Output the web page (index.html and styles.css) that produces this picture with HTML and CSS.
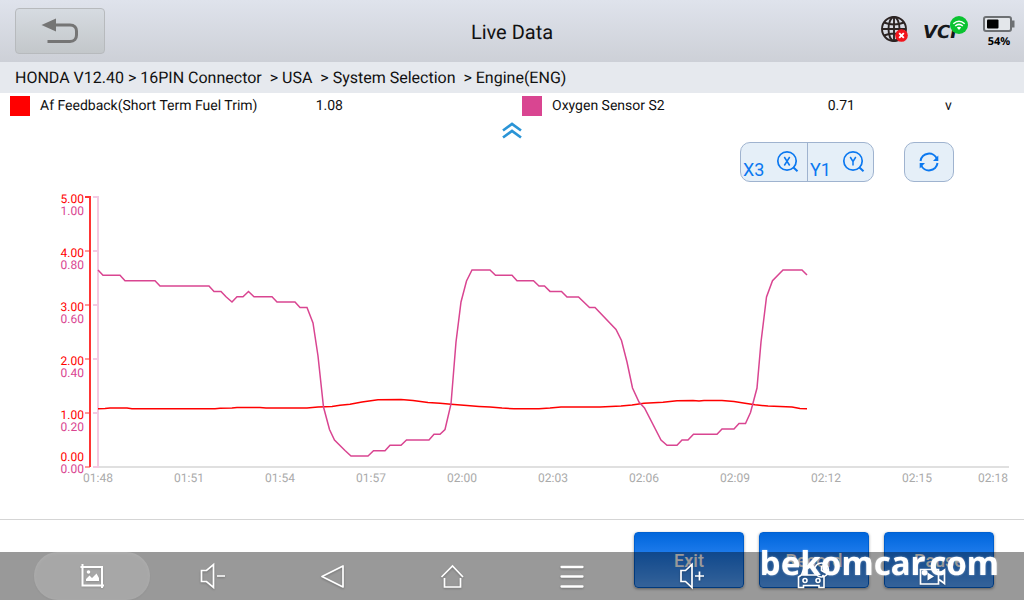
FILE: index.html
```html
<!DOCTYPE html>
<html lang="en">
<head>
<meta charset="utf-8">
<meta name="viewport" content="width=device-width, initial-scale=1">
<title>Live Data</title>
<link rel="stylesheet" href="styles.css">
</head>
<body>
<header class="topbar">
  <button class="back" aria-label="Back">
    <svg width="40" height="28" viewBox="0 0 40 28"><path d="M15 8H30C34.500 8 36.500 11 36.500 14V18C36.500 21.500 34.500 24.500 30 24.500H7.500" fill="none" stroke="#757575" stroke-width="3"/><path d="M1.500 8L16 1.500V14.500Z" fill="#757575"/></svg>
  </button>
  <h1 class="title">Live Data</h1>
  <div class="status">
    <svg class="globe" width="30" height="30" viewBox="0 0 30 30">
      <g fill="none" stroke="#2c2423" stroke-width="1.900"><circle cx="15" cy="15" r="12"/><ellipse cx="15" cy="15" rx="5.500" ry="12"/><path d="M15 3V27M3 15H27M5 8.500Q15 12.500 25 8.500M5 21.500Q15 17.500 25 21.500"/></g>
      <circle cx="22.500" cy="21.500" r="6.300" fill="#f1141c"/><path d="M20.200 19.200L24.800 23.800M24.800 19.200L20.200 23.800" stroke="#fff" stroke-width="1.900"/>
    </svg>
    <div class="vci">VCI
      <svg class="wifi" width="18" height="18" viewBox="0 0 18 18"><circle cx="9" cy="9" r="9" fill="#0ac331"/><g fill="none" stroke="#fff" stroke-width="1.500"><path d="M3.300 7.800Q9 2.700 14.700 7.800M5.200 10Q9 6.700 12.800 10"/></g><path d="M6.800 11.500Q9 9.800 11.200 11.500L9 14Z" fill="#fff"/></svg>
    </div>
    <div class="battery">
      <svg width="32" height="18" viewBox="0 0 32 18"><rect x="1" y="2" width="27" height="14" rx="2" fill="#e3e6ea" stroke="#6d7073" stroke-width="2"/><path d="M29 5.500h2.500v7H29z" fill="#6d7073"/><rect x="4" y="4.500" width="11.500" height="9" rx="1" fill="#000"/></svg>
      <span>54%</span>
    </div>
  </div>
</header>
<nav class="crumbs" aria-label="Path">HONDA V12.40 &gt; 16PIN Connector  &gt; USA  &gt; System Selection  &gt; Engine(ENG)</nav>
<main class="content">
  <div class="legend">
    <div class="series"><i class="swatch red"></i><span>Af Feedback(Short Term Fuel Trim)</span><span class="value">1.08</span><span class="value"></span></div>
    <div class="series"><i class="swatch pink"></i><span>Oxygen Sensor S2</span><span class="value">0.71</span><span class="value">v</span></div>
  </div>
  <button class="collapse" aria-label="Collapse"><svg width="20" height="18" viewBox="0 0 20 18"><path d="M1 8.500L10 2L19 8.500M1 15.500L10 9L19 15.500" fill="none" stroke="#2a94d6" stroke-width="2.700"/></svg></button>
  <div class="tools">
    <div class="zoom">
      <button class="zoom-btn"><span>X3</span><svg width="24" height="24" viewBox="0 0 24 24"><g fill="none" stroke="#0b78f0" stroke-width="1.700"><circle cx="11" cy="11" r="9.200"/><path d="M17.200 17.200L21.500 21.300" stroke-width="2"/><path d="M8.300 7L13.700 15.500M13.700 7L8.300 15.500" stroke-width="1.500"/></g></svg></button>
      <button class="zoom-btn"><span>Y1</span><svg width="24" height="24" viewBox="0 0 24 24"><g fill="none" stroke="#0b78f0" stroke-width="1.700"><circle cx="11" cy="11" r="9.200"/><path d="M17.200 17.200L21.500 21.300" stroke-width="2"/><path d="M8.200 7L11 11.500L13.800 7M11 11.500V15.500" stroke-width="1.500"/></g></svg></button>
    </div>
    <button class="refresh" aria-label="Refresh"><svg width="24" height="24" viewBox="0 0 24 24"><g fill="none" stroke="#0b78f0" stroke-width="2"><path d="M3.500 11A8.600 8.600 0 0 1 20 9M20.500 13A8.600 8.600 0 0 1 4 15"/></g><path d="M21.300 5.500V11H16ZM2.700 18.500V13H8Z" fill="#0b78f0"/></svg></button>
  </div>
  <svg class="chart" viewBox="0 190 1024 300" role="img" aria-label="Live data graph">
    <path d="M98 467H1009" stroke="#e0e0e0" stroke-width="2"/>
    <g fill="none" stroke-width="2">
      <path d="M85 251H90M85 305H90M85 359H90M85 413H90M85 467H90" stroke="#f99"/>
      <path d="M85 197H90V467" stroke="#ff3434"/>
      <path d="M93 197H98V467H93M93 251H98M93 305H98M93 359H98M93 413H98" stroke="#f4cae3"/>
    </g>
    <g class="axis-red"><text x="84" y="203">5.00</text><text x="84" y="257">4.00</text><text x="84" y="311">3.00</text><text x="84" y="365">2.00</text><text x="84" y="419">1.00</text><text x="84" y="461">0.00</text></g>
    <g class="axis-pink"><text x="84" y="215">1.00</text><text x="84" y="269">0.80</text><text x="84" y="323">0.60</text><text x="84" y="377">0.40</text><text x="84" y="431">0.20</text><text x="84" y="473">0.00</text></g>
    <g class="axis-time"><text x="98" y="482">01:48</text><text x="189" y="482">01:51</text><text x="280" y="482">01:54</text><text x="371" y="482">01:57</text><text x="462" y="482">02:00</text><text x="553" y="482">02:03</text><text x="644" y="482">02:06</text><text x="735" y="482">02:09</text><text x="826" y="482">02:12</text><text x="917" y="482">02:15</text><text x="993" y="482">02:18</text></g>
    <polyline class="line-red" points="98,408.700 105,408.500 110,408 127,408 132,408.700 215,408.700 220,408.200 232,408 237,407.500 260,407.500 266,408 307,408 318,407 332,406.500 340,405.300 350,404.300 362,402 378,399.800 401,399.500 413,400.600 428,402.600 440,403.300 451,404.300 467,405.600 479,406.500 490,407.100 502,408.100 514,408.700 539,408.700 550,408 561,407 600,406.900 621,406 632,405 644,403.300 663,402.300 677,400.800 693,400.400 699,401 704,400.500 722,400.500 734,401.600 745,403.200 755,404.800 768,406 780,406.500 792,407.100 800,408.500 807,408.700"/>
    <polyline class="line-pink" points="98,270 103,275.300 120,275.300 125,280.700 155,280.700 160,286 209,286 214,291.400 221,291.400 226,296.800 232,302 237,296.800 243,296.800 248.500,291.500 254,296.800 272,296.800 277,302 295,302 300,307.500 307,307.500 313,323 318,356 323.500,407 329.500,429.500 334.500,440 345,450.500 351,456 368,456 373.500,450.800 385,450.800 390,445.300 401,445.300 406.500,440 429,440 434,434.300 440,434.300 445,429.500 451,404 456,342 461,302 466.500,281 472,270 490,270 495.500,275.300 512,275.300 517,280.700 533.500,280.700 539,286 544.500,286 550,291.400 561.500,291.400 567,297 578.500,297 589.500,307.500 595,307.500 616,329.500 621.500,340.500 627,362 632.500,388 639,402 644.500,408 661,440 667,445.300 677,445.300 682,440 688,440 693.500,434.300 717,434.300 722,429 734,429 739,423.600 745.500,423.600 750.500,412.500 757,388 761,342 766.500,297 772.500,280.700 783,270 802,270 807,275"/>
  </svg>
</main>
<footer class="actions">
  <button class="action">Exit</button>
  <button class="action">Record</button>
  <button class="action">Pause</button>
</footer>
<nav class="sysbar" aria-label="System">
  <button class="sys active" aria-label="Screenshot"><svg width="32" height="32" viewBox="0 0 32 32"><path d="M6.500 4V25.500H28M4.500 7H26V28" fill="none" stroke="#fff" stroke-width="2"/><circle cx="12.500" cy="12" r="1.800" fill="#fff"/><path d="M10 21V19L13.500 15.500L16 18L20.500 13.500L23 18V21Z" fill="#fff"/></svg></button>
  <button class="sys" aria-label="Volume down"><svg width="32" height="32" viewBox="0 0 32 32"><path d="M5.500 10.500H10.500L17.500 4.500V27.500L10.500 21.500H5.500ZM21 16H29" fill="none" stroke="#fff" stroke-width="1.700"/></svg></button>
  <button class="sys" aria-label="Back"><svg width="32" height="32" viewBox="0 0 32 32"><path d="M27 6V27L6 16.500Z" fill="none" stroke="#fff" stroke-width="1.700" stroke-linejoin="round"/></svg></button>
  <button class="sys" aria-label="Home"><svg width="32" height="32" viewBox="0 0 32 32"><path d="M5.500 17L16.500 6L27 17M8.500 18V27H24.500V18" fill="none" stroke="#fff" stroke-width="1.700"/></svg></button>
  <button class="sys" aria-label="Menu"><svg width="32" height="32" viewBox="0 0 32 32"><path d="M5.500 7H26.500M5.500 16.500H26.500M5.500 26.500H26.500" stroke="#fff" stroke-width="2.300" stroke-linecap="round"/></svg></button>
  <button class="sys" aria-label="Volume up"><svg width="32" height="32" viewBox="0 0 32 32"><path d="M5 10.500H9.500L16 4.500V27.500L9.500 21.500H5ZM19 16H28M23.500 11.500V20.500" fill="none" stroke="#fff" stroke-width="1.700"/></svg></button>
  <button class="sys" aria-label="Vehicle"><svg width="36" height="32" viewBox="0 0 36 32"><g fill="none" stroke="#fff" stroke-width="1.600"><path d="M20 7H10.500L7.500 15L4.500 17V27.500H9.500V25.500H25V27.500H30V17L28.500 15M8 15H22"/><circle cx="11" cy="20.500" r="2"/><circle cx="24" cy="20.500" r="2"/><circle cx="27.500" cy="10" r="7"/><path d="M27.500 6V10.500L31 12.500"/></g></svg></button>
  <button class="sys" aria-label="Record screen"><svg width="32" height="32" viewBox="0 0 32 32"><path d="M4.500 9.500H22.500V24H4.500ZM23 14L28.500 10V23.500L23 19.500" fill="none" stroke="#fff" stroke-width="1.700"/><path d="M11.500 12.500L18 16.500L11.500 20.500Z" fill="#fff"/></svg></button>
</nav>
<div class="watermark">bekomcar.com</div>
</body>
</html>
```
FILE: styles.css
```css
* { box-sizing: border-box; }
body {
  margin: 0;
  min-height: 100vh;
  display: flex;
  flex-direction: column;
  background: #fff;
  color: #111;
  font-family: Roboto, "Liberation Sans", sans-serif;
  text-rendering: geometricPrecision;
}
button { font: inherit; padding: 0; border: 0; background: none; cursor: pointer; }
svg { display: block; }

.topbar {
  display: grid;
  grid-template-columns: 1fr auto 1fr;
  align-items: center;
  height: 62px;
  padding: 0 15px;
  background: linear-gradient(#dfe3ec, #cdd0d7);
}
.back {
  display: flex;
  align-items: center;
  justify-content: center;
  width: 90px;
  height: 46px;
  border: 1px solid #b7babd;
  border-radius: 4px;
  background: linear-gradient(#d6dbe1, #c3c7ca);
}
.title { margin: 0; padding-top: 2px; font-size: 20px; font-weight: 400; line-height: 24px; }
.status {
  display: flex;
  justify-content: flex-end;
  align-items: center;
  gap: 14px;
  margin-right: -6px;
}
.globe { margin-bottom: 4px; }
.vci {
  position: relative;
  width: 46px;
  padding-top: 4px;
  font: italic bold 18px/20px "DejaVu Sans", sans-serif;
  color: #15171a;
}
.wifi { position: absolute; top: -3px; right: 1px; }
.battery {
  display: flex;
  flex-direction: column;
  align-items: center;
  gap: 2px;
  padding-top: 2px;
  font: bold 11px/14px "Noto Sans", sans-serif;
  color: #000;
}

.crumbs {
  padding: 4px 15px;
  background: #e6e9ee;
  font-size: 16px;
  line-height: 23px;
  white-space: pre-wrap;
}

.content { flex: 1; }
.legend { display: grid; grid-template-columns: 1fr 1fr; font-size: 14px; line-height: 20px; padding-top: 3px; }
.series { display: grid; grid-template-columns: 30px 11fr 5fr 5fr; padding: 0 22px 0 10px; }
.swatch { width: 20px; height: 20px; }
.red { background: #f00; }
.pink { background: #d94591; }
.value { text-align: center; }
.collapse { display: block; margin: 6px auto 0; }
.tools {
  display: flex;
  justify-content: flex-end;
  gap: 30px;
  padding: 2px 70px 8px 0;
}
.zoom, .refresh {
  height: 40px;
  border: 1px solid #9fb3cf;
  border-radius: 10px;
  background: #e5eff8;
  color: #0b78f0;
}
.zoom { display: flex; }
.zoom-btn {
  display: flex;
  align-items: flex-end;
  justify-content: space-between;
  width: 66px;
  padding: 0 7px 0 2px;
  color: inherit;
  font-size: 18px;
  line-height: 22px;
}
.zoom-btn svg { margin-bottom: 7px; }
.zoom-btn + .zoom-btn { border-left: 1px solid #9fb3cf; }
.refresh { display: grid; place-items: center; width: 50px; }

.chart { width: 100%; }
.chart text { font-size: 12px; }
.axis-red { fill: #f00; text-anchor: end; }
.axis-pink { fill: #d94591; text-anchor: end; }
.axis-time { fill: #aaa; text-anchor: middle; }
.line-red, .line-pink { fill: none; stroke-width: 1.5px; }
.line-red { stroke: #f00; }
.line-pink { stroke: #d94591; }

.actions {
  display: flex;
  justify-content: flex-end;
  gap: 15px;
  padding: 12px 30px;
  border-top: 1px solid #d5d5d5;
}
.action {
  width: 110px;
  height: 56px;
  border: 1px solid #0060d0;
  border-radius: 4px;
  background: linear-gradient(#0066dc, #1f7cec 40%, #58a4ff);
  box-shadow: 0 1px 3px #0006;
  color: #fff;
  font-size: 18px;
  font-weight: 500;
}
.sysbar {
  position: fixed;
  inset: auto 0 0;
  display: grid;
  grid-template-columns: repeat(8, 1fr);
  height: 48px;
  padding: 0 32px;
  background: #0006;
}
.sys { display: grid; place-items: center; margin: 0 2px; border-radius: 24px; filter: drop-shadow(0 1px 1px #0004); }
.active { background: #fff3; }
.watermark {
  position: fixed;
  right: 25px;
  bottom: 14px;
  color: #fff;
  font: bold 33px/46px "Noto Sans", sans-serif;
  text-shadow: 0 0 2px #fff8;
  pointer-events: none;
}
```
